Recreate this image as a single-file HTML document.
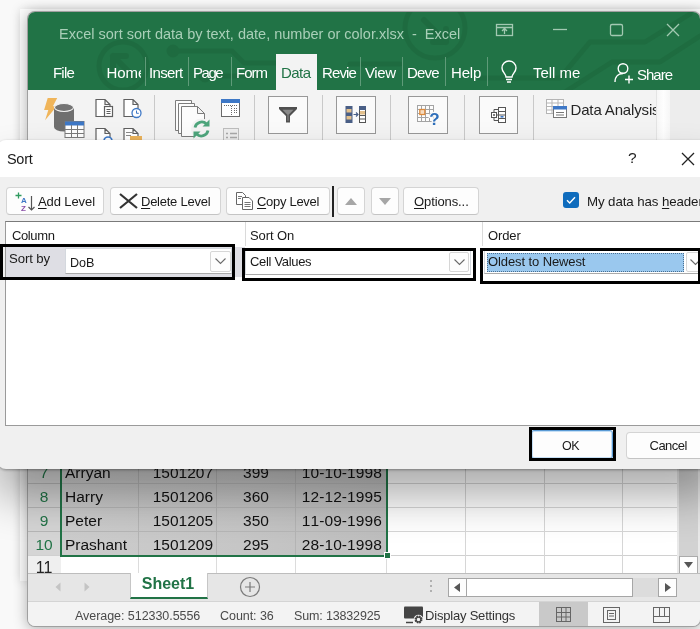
<!DOCTYPE html>
<html><head><meta charset="utf-8">
<style>
*{box-sizing:border-box;margin:0;padding:0}
html,body{width:700px;height:629px;overflow:hidden;background:#f9f9f9;font-family:"Liberation Sans",sans-serif;}
body{position:relative}
.abs{position:absolute}
#win{left:27px;top:11px;width:674px;height:616px;border-radius:8px;background:#e6e6e6;overflow:hidden;box-shadow:0 2px 14px rgba(0,0,0,.30);border:1px solid rgba(0,0,0,.3)}
#pg{left:-28px;top:-12px;width:700px;height:629px;will-change:transform}
#hdr{left:0;top:0;width:720px;height:90px;background:#217346}
.wt{color:#fff;font-size:15px;white-space:nowrap;top:62.5px;line-height:20px}
.tsep{width:1px;background:#5f9b79;top:57px;height:29px}
#ribbon{left:0;top:90px;width:720px;height:60px;background:#f3f3f3}
.sep{width:1px;background:#c9c9c9;top:95px;height:50px}
.rbtn{background:#fafafa;border:1px solid #989898;top:96px;height:38px;width:40px}
#dlg{left:-3px;top:140px;width:720px;height:328.5px;border-radius:9px;background:#f0f0f0;overflow:hidden;box-shadow:0 28px 44px rgba(0,0,0,.32),0 1px 3px rgba(0,0,0,.35);}
#dp{left:3px;top:-140px;width:700px;height:629px;will-change:transform}
#dtitle{left:-5px;top:140px;width:720px;height:37px;background:#fff}
.btn{background:#fdfdfd;border:1px solid #d4d4d4;border-bottom-color:#c4c4c4;border-radius:4px;top:187px;height:28px}
.t{font-size:13px;color:#1a1a1a;white-space:nowrap;line-height:16px;letter-spacing:-0.1px}
.ann{border:3px solid #000}
.combo{background:#fff;border:1px solid #d4d8de;border-bottom-color:#a9a9a9}
.ddb{background:#fdfdfd;border:1px solid #d6d6d6;border-radius:2px}
u{text-decoration:underline;text-underline-offset:1.5px}
.cell{font-kerning:none;font-size:15.5px;color:#111;white-space:nowrap;line-height:24px;height:24px;margin-top:1px}
.rh{font-size:15.5px;color:#217346;white-space:nowrap;line-height:24px;height:24px;width:32px;text-align:center;left:28px;margin-top:1px}
.hl{background:#bdbdbd;height:1px}
.vl{background:#bdbdbd;width:1px}
.st{font-size:12.5px;color:#4a4a4a;white-space:nowrap;line-height:16px;top:608px;letter-spacing:-0.05px}
</style></head><body>
<div class="abs" style="left:20px;top:9px;width:700px;height:572px;background:#fbfbfb;box-shadow:0 0 10px rgba(0,0,0,.13)"></div>
<div id="win" class="abs"><div id="pg" class="abs">
  <div id="hdr" class="abs"></div>
  <!-- header decoration -->
  <svg class="abs" style="left:28px;top:11px" width="672" height="79" viewBox="28 11 672 79">
    <g fill="none" stroke="#1a6038" stroke-width="5" stroke-linecap="round" stroke-linejoin="round" opacity=".38">
      <circle cx="123" cy="66" r="24"/>
      <path d="M113 56 L134 77 M113 56 h13 M113 56 v13" stroke-width="6"/>
      <path d="M173 51 H232 l12 12 H300 M205 76 H262"/>
      <circle cx="173" cy="51" r="4"/><circle cx="205" cy="76" r="4"/>
      <circle cx="435" cy="28" r="30"/>
      <path d="M424 20 L446 42 M446 42 v-13 M446 42 h-13" stroke-width="6"/>
      <path d="M480 78 H560 L590 42 H645 L690 14 M565 92 L612 62 H660 L700 36 M350 64 H400"/>
    </g>
  </svg>
  <div class="abs" style="left:59px;top:24px;color:#a9cfb8;font-size:14.5px;white-space:nowrap;line-height:20px">Excel sort sort data by text, date, number or color.xlsx&nbsp; -&nbsp; Excel</div>
  <!-- window controls -->
  <svg class="abs" style="left:490px;top:18px" width="200" height="26" viewBox="490 18 200 26" fill="none" stroke="#a3c9b2" stroke-width="1.3">
    <rect x="496.5" y="24.5" width="16" height="11"/><path d="M497 27.5 h15 M504.5 34 v-5 M502 31 l2.5 -2.5 l2.5 2.5"/>
    <path d="M553 29.5 h14"/>
    <rect x="610.5" y="24.5" width="12" height="11" rx="1.5"/>
    <path d="M667 24 l12 12 M679 24 l-12 12"/>
  </svg>
  <!-- tabs -->
  <div class="abs wt" style="left:53px;letter-spacing:-0.79px">File</div>
  <div class="abs wt" style="left:106.5px;width:34.5px;overflow:hidden;letter-spacing:-0.09px">Home</div>
  <div class="abs tsep" style="left:145px"></div>
  <div class="abs wt" style="left:149px;letter-spacing:-0.66px">Insert</div>
  <div class="abs tsep" style="left:188px"></div>
  <div class="abs wt" style="left:193px;letter-spacing:-1.48px">Page</div>
  <div class="abs tsep" style="left:231px"></div>
  <div class="abs wt" style="left:236px;letter-spacing:-0.97px">Form</div>
  <div class="abs" style="left:276px;top:54px;width:41px;height:37px;background:#f3f3f3"></div>
  <div class="abs wt" style="left:281px;color:#217346;letter-spacing:-0.56px">Data</div>
  <div class="abs wt" style="left:322px;letter-spacing:-0.89px">Revie</div>
  <div class="abs tsep" style="left:360px"></div>
  <div class="abs wt" style="left:365px;letter-spacing:-0.38px">View</div>
  <div class="abs tsep" style="left:402px"></div>
  <div class="abs wt" style="left:407px;letter-spacing:-0.84px">Deve</div>
  <div class="abs tsep" style="left:445px"></div>
  <div class="abs wt" style="left:451px;letter-spacing:-0.19px">Help</div>
  <div class="abs tsep" style="left:487px"></div>
  <svg class="abs" style="left:499px;top:60px" width="20" height="24" viewBox="0 0 20 24" fill="none" stroke="#fff" stroke-width="1.4"><path d="M7 17 c0 -3 -4 -5 -4 -9 a7 7 0 0 1 14 0 c0 4 -4 6 -4 9 z M7 19.5 h6 M8 22 h4"/></svg>
  <div class="abs wt" style="left:533px;letter-spacing:-0.02px">Tell me</div>
  <svg class="abs" style="left:613px;top:62px" width="22" height="22" viewBox="0 0 22 22" fill="none" stroke="#fff" stroke-width="1.4"><circle cx="10" cy="6.5" r="4.8"/><path d="M2 20 c0 -6 4 -8.5 8 -8.5 M12 17.5 h8 M16 13.5 v8"/></svg>
  <div class="abs wt" style="left:637px;top:64.5px;letter-spacing:-1.01px">Share</div>

  <div id="ribbon" class="abs"></div>
  <div class="abs" style="left:276px;top:88px;width:41px;height:4px;background:#f3f3f3"></div>
  <!-- ribbon icons -->
  <svg class="abs" style="left:28px;top:90px" width="672" height="50" viewBox="28 90 672 50">
    <!-- get data -->
    <path d="M47.700 98 h9.500 l-4.300 8.300 h3.800 l-11.600 14 l3.200 -10.300 h-4.200 z" fill="#f0b55a"/>
    <path d="M54 108 v19 a10 4.5 0 0 0 20 0 v-19 z" fill="#6f6f6f"/>
    <ellipse cx="64" cy="107.5" rx="9.5" ry="4" fill="#747474" stroke="#f3f3f3" stroke-width="1.1"/>
    <rect x="65" y="121.5" width="19" height="16" fill="#fff" stroke="#7b7b7b"/>
    <rect x="65" y="121.5" width="19" height="4" fill="#3e78c6"/>
    <path d="M65 129.500 h19 M65 133.500 h19 M71.500 125 v12 M77.500 125 v12" stroke="#7b7b7b" stroke-width="1"/>
    <!-- doc icons -->
    <g fill="#fff" stroke="#5f5f5f" stroke-width="1.2">
      <path d="M96 99.500 h9 l5 5 v12 h-14 z M105 99.500 v5 h5"/>
      <rect x="104.500" y="106.500" width="8" height="10"/>
      <path d="M124 99.500 h9 l5 5 v12 h-14 z M133 99.500 v5 h5"/>
      <path d="M96 128.500 h9 l5 5 v12 h-14 z M105 128.500 v5 h5"/>
      <path d="M124 128.500 h9 l5 5 v12 h-14 z M133 128.500 v5 h5"/>
    </g>
    <path d="M106.500 109.500 h4 M106.500 111.500 h4 M106.500 113.500 h4" stroke="#5f5f5f" stroke-width="1"/>
    <circle cx="136.500" cy="113" r="4.500" fill="#fff" stroke="#3e78c6" stroke-width="1.3"/>
    <path d="M136.500 110.500 v2.800 h2.300" stroke="#3e78c6" fill="none" stroke-width="1"/>
    <circle cx="108" cy="141" r="4" fill="#fff" stroke="#3e78c6" stroke-width="1.6"/>
    <rect x="130" y="136" width="12" height="6" fill="#eab25a"/>
    <path d="M126 132.500 h7 M126 135.500 h5" stroke="#8a8a8a"/>
    <!-- refresh all -->
    <g fill="#fcfcfc" stroke="#7c7c7c" stroke-width="1">
      <path d="M175.500 100.500 h16 v30 h-16 z"/>
      <path d="M178.500 103.500 h16 v30 h-16 z"/>
      <path d="M181.500 106.500 h16 l7 7 v23 h-23 z M197.500 106.500 v7 h7"/>
    </g>
    <circle cx="201.500" cy="129" r="10.500" fill="#f3f3f3"/>
    <g fill="none" stroke="#4ea57c" stroke-width="2.800">
      <path d="M195 127.500 a6.800 6.800 0 0 1 11.500 -3.500"/>
      <path d="M208 130.500 a6.800 6.800 0 0 1 -11.500 3.500"/>
    </g>
    <path d="M209.500 119.500 v7 h-7 z M193.500 138.500 v-7 h7 z" fill="#4ea57c"/>
    <!-- window icons -->
    <rect x="221.500" y="99.500" width="18" height="17" fill="#fff" stroke="#6a6a6a"/>
    <rect x="221" y="99" width="19" height="4" fill="#3e78c6"/>
    <path d="M231.500 106 v10 M234 108.500 h4 M234 110.500 h4 M234 112.500 h4 M224 105.500 h13" stroke="#6a6a6a" stroke-width="1" stroke-dasharray="1 1"/>
    <rect x="223.500" y="128.500" width="15" height="14" fill="#ededed" stroke="#bdbdbd"/>
    <path d="M226 133.500 h2 M230 133.500 h7 M226 137.500 h2 M230 137.500 h7" stroke="#a8a8a8" stroke-width="1.4"/>
  </svg>
  <div class="abs sep" style="left:154px"></div>
  <div class="abs sep" style="left:254px"></div>
  <div class="abs rbtn" style="left:268px"></div>
  <svg class="abs" style="left:278px;top:106px" width="20" height="18" viewBox="0 0 20 18"><path d="M1 1 h18 v2 l-7 7 v6.500 h-4 v-6.500 l-7 -7 z" fill="#505050"/><path d="M4.500 3.800 h11 l-5 5 v6 h-1 v-6 z" fill="#8a8a8a"/></svg>
  <div class="abs sep" style="left:322px"></div>
  <div class="abs rbtn" style="left:336px"></div>
  <svg class="abs" style="left:345px;top:105px" width="22" height="19" viewBox="0 0 22 19">
    <rect x="0.500" y="1" width="7" height="17" fill="#4a5f86"/><rect x="1.500" y="4" width="5" height="3.500" fill="#e3c08c"/><rect x="1.500" y="11" width="5" height="3.500" fill="#e3c08c"/>
    <path d="M8.500 9.500 h4 M11 7.500 l2 2 l-2 2" stroke="#4a5f86" fill="none" stroke-width="1.2"/>
    <rect x="14.500" y="1.500" width="6" height="16" fill="#fff" stroke="#555"/><rect x="14" y="1" width="7" height="4" fill="#4a5f86"/><rect x="15" y="6" width="5" height="3.500" fill="#e3c08c"/>
    <path d="M14.500 10.500 h6 M14.500 14 h6" stroke="#555"/>
  </svg>
  <div class="abs sep" style="left:390px"></div>
  <div class="abs rbtn" style="left:408px"></div>
  <svg class="abs" style="left:417px;top:105px" width="23" height="21" viewBox="0 0 23 21">
    <rect x="0.500" y="0.500" width="16" height="16" fill="#fdfdfd" stroke="#a4a4a4"/>
    <path d="M0.500 4.500 h16 M0.500 8.500 h16 M0.500 12.500 h16 M4.500 0.500 v16 M8.500 0.500 v16 M12.500 0.500 v16" stroke="#a4a4a4"/>
    <rect x="2.800" y="4.500" width="5" height="5" fill="#f6dcc0" stroke="#dd8a3c" stroke-width="1.300"/>
    <text x="12.300" y="20" font-family="Liberation Sans, sans-serif" font-weight="bold" font-size="17" fill="#2f6fba" stroke="#fafafa" stroke-width="2.500" paint-order="stroke">?</text>
  </svg>
  <div class="abs sep" style="left:464px"></div>
  <div class="abs rbtn" style="left:479px;width:39px"></div>
  <svg class="abs" style="left:490px;top:106px" width="17" height="18" viewBox="0 0 17 18" fill="none" stroke="#555" stroke-width="1">
    <rect x="8.500" y="1.500" width="7" height="15" fill="#fff"/><path d="M8.500 5.500 h7 M8.500 9 h7 M8.500 12.500 h7" />
    <rect x="1.500" y="6.500" width="5" height="5" fill="#fff"/><path d="M3 9 h2 M4 8 v2 M6.500 9 h2 M4 6.500 v-3 h4.500 M4 11.500 v3 h4.500"/>
    <path d="M10.500 10.800 h3" stroke="#3e78c6" stroke-width="1.6"/>
  </svg>
  <div class="abs sep" style="left:533px"></div>
  <svg class="abs" style="left:546px;top:99px" width="21" height="20" viewBox="0 0 21 20">
    <rect x="0.500" y="0.500" width="17" height="14" fill="#fff" stroke="#b5b5b5"/>
    <path d="M0.500 4 h17 M0.500 7.500 h17 M0.500 11 h17 M6 0.500 v14 M12 0.500 v14" stroke="#b5b5b5"/>
    <rect x="7.500" y="7.500" width="13" height="11" fill="#fff" stroke="#777"/>
    <rect x="7" y="7" width="14" height="3.500" fill="#3e78c6"/>
    <path d="M10 13.500 h8 M10 16 h8" stroke="#777"/>
  </svg>
  <div class="abs" style="left:570.5px;top:99.5px;width:85.5px;overflow:hidden;font-size:15px;color:#262626;white-space:nowrap;line-height:20px;letter-spacing:-0.15px">Data Analysis</div>
  <div class="abs" style="left:656px;top:90px;width:14px;height:55px;background:linear-gradient(to right,#f6f6f6,#fefefe 50%,#f6f6f6);border-left:1px solid #e4e4e4"></div>
  <div class="abs" style="left:670px;top:90px;width:40px;height:55px;background:#ededed"></div>

  <!-- sheet -->
  <div class="abs" id="sheet" style="left:28px;top:440px;width:680px;height:133px;background:#fff"></div>
    <div class="abs" style="left:28px;top:440px;width:33px;height:116px;background:#d5d5d5"></div>
  <div class="abs" style="left:28px;top:556px;width:33px;height:17px;background:#efefef"></div>
  <div class="abs" style="left:61px;top:440px;width:326px;height:116px;background:linear-gradient(to right,#cccccc,#c6c6c6 55%,#bebebe)"></div>
  <!-- grid lines -->
  <div class="abs hl" style="left:28px;top:483px;width:359px;background:#b6b6b6"></div><div class="abs hl" style="left:388px;top:483px;width:289px;background:#d6d6d6"></div>
  <div class="abs hl" style="left:28px;top:507px;width:359px;background:#b6b6b6"></div><div class="abs hl" style="left:388px;top:507px;width:289px;background:#d6d6d6"></div>
  <div class="abs hl" style="left:28px;top:531px;width:359px;background:#b6b6b6"></div><div class="abs hl" style="left:388px;top:531px;width:289px;background:#d6d6d6"></div>
  <div class="abs hl" style="left:28px;top:555px;width:649px;background:#d0d0d0"></div>
  <div class="abs vl" style="left:138px;top:440px;height:133px;background:#b4b4b4"></div>
  <div class="abs vl" style="left:216px;top:440px;height:133px;background:#b4b4b4"></div>
  <div class="abs vl" style="left:295px;top:440px;height:133px;background:#b4b4b4"></div>
  <div class="abs vl" style="left:465px;top:440px;height:133px;background:#d6d6d6"></div>
  <div class="abs vl" style="left:544px;top:440px;height:133px;background:#d6d6d6"></div>
  <div class="abs vl" style="left:622px;top:440px;height:133px;background:#d6d6d6"></div>
  <div class="abs" style="left:61px;top:556px;width:326px;height:17px;background:#fff"></div>
  <div class="abs vl" style="left:138px;top:556px;height:17px;background:#dcdcdc"></div>
  <div class="abs vl" style="left:216px;top:556px;height:17px;background:#dcdcdc"></div>
  <div class="abs vl" style="left:295px;top:556px;height:17px;background:#dcdcdc"></div>
  <div class="abs vl" style="left:386px;top:556px;height:17px;background:#dcdcdc"></div>
  <!-- selection border -->
  <div class="abs" style="left:60px;top:440px;width:2px;height:117px;background:#217346"></div>
  <div class="abs" style="left:386px;top:440px;width:2px;height:113px;background:#217346"></div>
  <div class="abs" style="left:60px;top:555px;width:325px;height:2px;background:#217346"></div>
  <div class="abs" style="left:384.5px;top:552.5px;width:5px;height:5px;background:#217346;outline:1px solid #fff"></div>
  <!-- row headers -->
  <div class="abs rh" style="top:460px">7</div>
  <div class="abs rh" style="top:484px">8</div>
  <div class="abs rh" style="top:508px">9</div>
  <div class="abs rh" style="top:532px">10</div>
  <div class="abs rh" style="top:555px;color:#222;font-size:16px">11</div>
  <!-- cells -->
  <div class="abs cell" style="left:65px;top:460px">Arryan</div>
  <div class="abs cell" style="left:65px;top:484px">Harry</div>
  <div class="abs cell" style="left:65px;top:508px">Peter</div>
  <div class="abs cell" style="left:65px;top:532px">Prashant</div>
  <div class="abs cell" style="left:139px;width:77px;text-align:right;padding-right:3px;top:460px">1501207</div>
  <div class="abs cell" style="left:139px;width:77px;text-align:right;padding-right:3px;top:484px">1501206</div>
  <div class="abs cell" style="left:139px;width:77px;text-align:right;padding-right:3px;top:508px">1501205</div>
  <div class="abs cell" style="left:139px;width:77px;text-align:right;padding-right:3px;top:532px">1501209</div>
  <div class="abs cell" style="left:217px;width:78px;text-align:center;top:460px">399</div>
  <div class="abs cell" style="left:217px;width:78px;text-align:center;top:484px">360</div>
  <div class="abs cell" style="left:217px;width:78px;text-align:center;top:508px">350</div>
  <div class="abs cell" style="left:217px;width:78px;text-align:center;top:532px">295</div>
  <div class="abs cell" style="left:296px;width:90px;text-align:right;padding-right:4px;letter-spacing:0.1px;top:460px">10-10-1998</div>
  <div class="abs cell" style="left:296px;width:90px;text-align:right;padding-right:4px;letter-spacing:0.1px;top:484px">12-12-1995</div>
  <div class="abs cell" style="left:296px;width:90px;text-align:right;padding-right:4px;letter-spacing:0.1px;top:508px">11-09-1996</div>
  <div class="abs cell" style="left:296px;width:90px;text-align:right;padding-right:4px;letter-spacing:0.1px;top:532px">28-10-1998</div>
  <!-- v scrollbar -->
  <div class="abs" style="left:677px;top:440px;width:30px;height:133px;background:#e9e9e9"></div>
  <div class="abs" style="left:679px;top:440px;width:19px;height:116px;background:#d2d2d2"></div>
  <div class="abs" style="left:679px;top:556px;width:19px;height:18px;background:#fdfdfd;border:1px solid #ababab"></div>
  <svg class="abs" style="left:684px;top:562px" width="9" height="6" viewBox="0 0 9 6"><path d="M0 0 h9 l-4.500 6 z" fill="#555"/></svg>
  <!-- tab bar -->
  <div class="abs" style="left:28px;top:573px;width:680px;height:29px;background:#e6e6e6;border-top:1px solid #bdbdbd"></div>
  <div class="abs" style="left:130px;top:573px;width:78px;height:26px;background:#fff;border-bottom:2px solid #217346;border-left:1px solid #c6c6c6;border-right:1px solid #c6c6c6"></div>
  <div class="abs" style="left:129px;top:573px;width:78px;height:24px;text-align:center;font-weight:bold;color:#217346;font-size:16px;line-height:22px">Sheet1</div>
  <svg class="abs" style="left:55px;top:582px" width="40" height="11" viewBox="0 0 40 11"><path d="M5.500 0.500 v9 l-5 -4.500 z M29.500 0.500 v9 l5 -4.500 z" fill="#c4c4c4"/></svg>
  <svg class="abs" style="left:239px;top:576px" width="22" height="22" viewBox="0 0 22 22" fill="none" stroke="#7a7a7a" stroke-width="1.2"><circle cx="11" cy="11" r="9.500"/><path d="M6 11 h10 M11 6 v10"/></svg>
  <div class="abs" style="left:430px;top:580px;width:2px;height:2px;background:#b0b0b0;box-shadow:0 5px 0 #b0b0b0,0 10px 0 #b0b0b0"></div>
  <div class="abs" style="left:448px;top:578px;width:229px;height:19px;background:#dcdcdc"></div>
  <div class="abs" style="left:448px;top:578px;width:19px;height:19px;background:#fdfdfd;border:1px solid #a6a6a6"></div>
  <svg class="abs" style="left:454px;top:583px" width="6" height="9" viewBox="0 0 6 9"><path d="M6 0 v9 l-6 -4.500 z" fill="#555"/></svg>
  <div class="abs" style="left:466px;top:578px;width:167px;height:19px;background:#fff;border:1px solid #a6a6a6"></div>
  <div class="abs" style="left:658px;top:578px;width:19px;height:19px;background:#fdfdfd;border:1px solid #a6a6a6"></div>
  <svg class="abs" style="left:665px;top:583px" width="6" height="9" viewBox="0 0 6 9"><path d="M0 0 v9 l6 -4.500 z" fill="#555"/></svg>
  <!-- status bar -->
  <div class="abs" style="left:28px;top:601px;width:680px;height:28px;background:#f3f3f3;border-top:1px solid #d4d4d4"></div>
  <div class="abs st" style="left:75px">Average: 512330.5556</div>
  <div class="abs st" style="left:220px">Count: 36</div>
  <div class="abs st" style="left:294px;letter-spacing:-0.15px">Sum: 13832925</div>
  <svg class="abs" style="left:403px;top:606px" width="22" height="19" viewBox="0 0 22 19"><rect x="1" y="0.500" width="19" height="12" rx="1" fill="#444"/><path d="M3 16.500 h7" stroke="#444" stroke-width="1.5"/><circle cx="15.500" cy="13.500" r="4.800" fill="#f3f3f3"/><circle cx="15.500" cy="13.500" r="3" fill="none" stroke="#444" stroke-width="2" stroke-dasharray="1.6 0.750"/><circle cx="15.500" cy="13.500" r="2.400" fill="none" stroke="#444" stroke-width="1.2"/></svg>
  <div class="abs st" style="left:425px;font-size:13px;color:#333;letter-spacing:-0.2px">Display Settings</div>
  <div class="abs" style="left:539px;top:602px;width:49px;height:25px;background:#c9c9c9"></div>
  <svg class="abs" style="left:555px;top:606px" width="120" height="18" viewBox="0 0 120 18" fill="none" stroke="#666" stroke-width="1">
    <rect x="1.500" y="1.500" width="14" height="14"/><path d="M1.500 6.500 h14 M1.500 11 h14 M6.500 1.500 v14 M11 1.500 v14"/>
    <rect x="48.500" y="1.500" width="16" height="15"/><rect x="52.500" y="4.500" width="8" height="9"/><path d="M54 7.500 h5 M54 10 h5"/>
    <rect x="98.500" y="1.500" width="16" height="15"/><path d="M104.500 1.500 v9 M98.500 10.500 h16 M109.500 1.500 v9"/>
  </svg>
</div></div>

<!-- dialog -->
<div id="dlg" class="abs"><div id="dp" class="abs">
  <div id="dtitle" class="abs"></div>
  <div class="abs t" style="left:7px;top:151px;font-size:14.500px;letter-spacing:-0.3px">Sort</div>
  <div class="abs" style="left:628px;top:149px;font-size:15.5px;line-height:18px;color:#222">?</div>
  <svg class="abs" style="left:681px;top:152px" width="14" height="14" viewBox="0 0 14 14"><path d="M1 1 l12 12 M13 1 l-12 12" stroke="#222" stroke-width="1.300" fill="none"/></svg>
  <!-- toolbar buttons -->
  <div class="abs btn" style="left:6px;width:98px"></div>
  <svg class="abs" style="left:15px;top:192px" width="21" height="19" viewBox="0 0 21 19">
    <path d="M3.500 0.500 v6 M0.500 3.500 h6" stroke="#2f9a5f" stroke-width="1.300"/>
    <text x="6" y="10.500" font-family="Liberation Sans, sans-serif" font-size="8" font-weight="bold" fill="#3e78c6">A</text>
    <text x="6" y="18.500" font-family="Liberation Sans, sans-serif" font-size="8" font-weight="bold" fill="#8a4fa8">Z</text>
    <path d="M16.500 4 v14 M13.500 15 l3 3 l3 -3" stroke="#555" stroke-width="1.200" fill="none"/>
  </svg>
  <div class="abs t" style="left:38px;top:194px"><u>A</u>dd Level</div>
  <div class="abs btn" style="left:110px;width:111px"></div>
  <svg class="abs" style="left:119px;top:193px" width="19" height="16" viewBox="0 0 19 16"><path d="M1 1 l17 14 M18 1 l-17 14" stroke="#333" stroke-width="2.200" fill="none"/></svg>
  <div class="abs t" style="left:141px;top:194px;letter-spacing:-0.25px"><u>D</u>elete Level</div>
  <div class="abs btn" style="left:226px;width:104px"></div>
  <svg class="abs" style="left:236px;top:192px" width="18" height="18" viewBox="0 0 18 18" fill="#fff" stroke="#666" stroke-width="1">
    <path d="M0.500 0.500 h6 l3 3 v9 h-9 z"/><path d="M6.500 5.500 h6.500 l3.500 3.500 v8.500 h-10 z"/><path d="M8.500 10.500 h6 M8.500 12.500 h6 M8.500 14.500 h6" stroke-width=".9"/><path d="M2 4.500 h4 M2 6.500 h3" stroke-width=".9"/>
  </svg>
  <div class="abs t" style="left:257px;top:194px;letter-spacing:-0.3px"><u>C</u>opy Level</div>
  <div class="abs" style="left:332px;top:186px;width:2px;height:31px;background:#222"></div>
  <div class="abs btn" style="left:337px;width:28px"></div>
  <svg class="abs" style="left:345px;top:198px" width="12" height="7" viewBox="0 0 12 7"><path d="M0 7 h12 l-6 -7 z" fill="#a6a6a6"/></svg>
  <div class="abs btn" style="left:371px;width:28px"></div>
  <svg class="abs" style="left:379px;top:198px" width="12" height="7" viewBox="0 0 12 7"><path d="M0 0 h12 l-6 7 z" fill="#a6a6a6"/></svg>
  <div class="abs btn" style="left:403px;width:76px"></div>
  <div class="abs t" style="left:414px;top:194px"><u>O</u>ptions...</div>
  <div class="abs" style="left:563px;top:192px;width:16px;height:16px;background:#0f6cbd;border-radius:3px"></div>
  <svg class="abs" style="left:563px;top:192px" width="16" height="16" viewBox="0 0 16 16"><path d="M4 8.300 l2.700 2.700 l5.300 -5.800" stroke="#fff" stroke-width="1.400" fill="none"/></svg>
  <div class="abs t" style="left:587px;top:194px;font-size:13.3px;letter-spacing:-0.1px">My data has <u>h</u>eaders</div>
  <!-- listbox -->
  <div class="abs" style="left:5px;top:221px;width:710px;height:205px;background:#fff;border:1px solid #9a9a9a;border-top-color:#7a7a7a"></div>
  <div class="abs" style="left:245px;top:222px;width:1px;height:24px;background:#dadada"></div>
  <div class="abs" style="left:482px;top:222px;width:1px;height:24px;background:#dadada"></div>
  <div class="abs t" style="left:12px;top:228px;letter-spacing:-0.38px">Column</div>
  <div class="abs t" style="left:250px;top:228px">Sort On</div>
  <div class="abs t" style="left:488px;top:228px">Order</div>
  <div class="abs" style="left:6px;top:247px;width:239px;height:30px;background:#dedee4"></div>
  <div class="abs t" style="left:9px;top:251px;font-size:13.2px">Sort by</div>
  <div class="abs combo" style="left:65px;top:248px;width:167px;height:26px"></div>
  <div class="abs t" style="left:70px;top:255px;font-size:12.6px">DoB</div>
  <div class="abs ddb" style="left:210px;top:251px;width:21px;height:21px"></div>
  <svg class="abs" style="left:215px;top:258px" width="11" height="7" viewBox="0 0 11 7"><path d="M0.500 0.500 l5 5 l5 -5" stroke="#6a6a6a" fill="none" stroke-width="1.100"/></svg>
  <div class="abs combo" style="left:245px;top:250px;width:226px;height:25px"></div>
  <div class="abs t" style="left:250px;top:254px;letter-spacing:-0.32px">Cell Values</div>
  <div class="abs ddb" style="left:449px;top:252px;width:20px;height:20px"></div>
  <svg class="abs" style="left:454px;top:259px" width="11" height="7" viewBox="0 0 11 7"><path d="M0.500 0.500 l5 5 l5 -5" stroke="#6a6a6a" fill="none" stroke-width="1.100"/></svg>
  <div class="abs combo" style="left:484px;top:250px;width:226px;height:24px"></div>
  <div class="abs" style="left:487px;top:252.5px;width:197px;height:19px;background:#9ac8ee;outline:1px dotted #4a6f90;outline-offset:-1px"></div>
  <div class="abs t" style="left:488px;top:254px">Oldest to Newest</div>
  <div class="abs ddb" style="left:686px;top:252px;width:20px;height:20px"></div>
  <svg class="abs" style="left:690px;top:259px" width="11" height="7" viewBox="0 0 11 7"><path d="M0.500 0.500 l5 5 l5 -5" stroke="#6a6a6a" fill="none" stroke-width="1.100"/></svg>
  <!-- annotation rectangles -->
  <div class="abs ann" style="left:0px;top:244px;width:235px;height:36px"></div>
  <div class="abs ann" style="left:242px;top:248px;width:234px;height:33px"></div>
  <div class="abs ann" style="left:480px;top:248px;width:220.7px;height:35.8px"></div>
  <!-- OK / Cancel -->
  <div class="abs" style="left:531px;top:430px;width:82px;height:29px;background:#fdfdfd;border:1px solid #5b9bd5;border-radius:3px;box-shadow:inset 0 0 0 1px #c5dff5"></div>
  <div class="abs t" style="left:530px;top:438px;width:81px;text-align:center;font-size:12.5px;letter-spacing:-0.6px">OK</div>
  <div class="abs ann" style="left:528.5px;top:426.5px;width:87.5px;height:34.5px"></div>
  <div class="abs btn" style="left:626px;top:432px;width:90px;height:27px"></div>
  <div class="abs t" style="left:649.5px;top:438px;letter-spacing:-0.5px">Cancel</div>
</div></div>
</body></html>
